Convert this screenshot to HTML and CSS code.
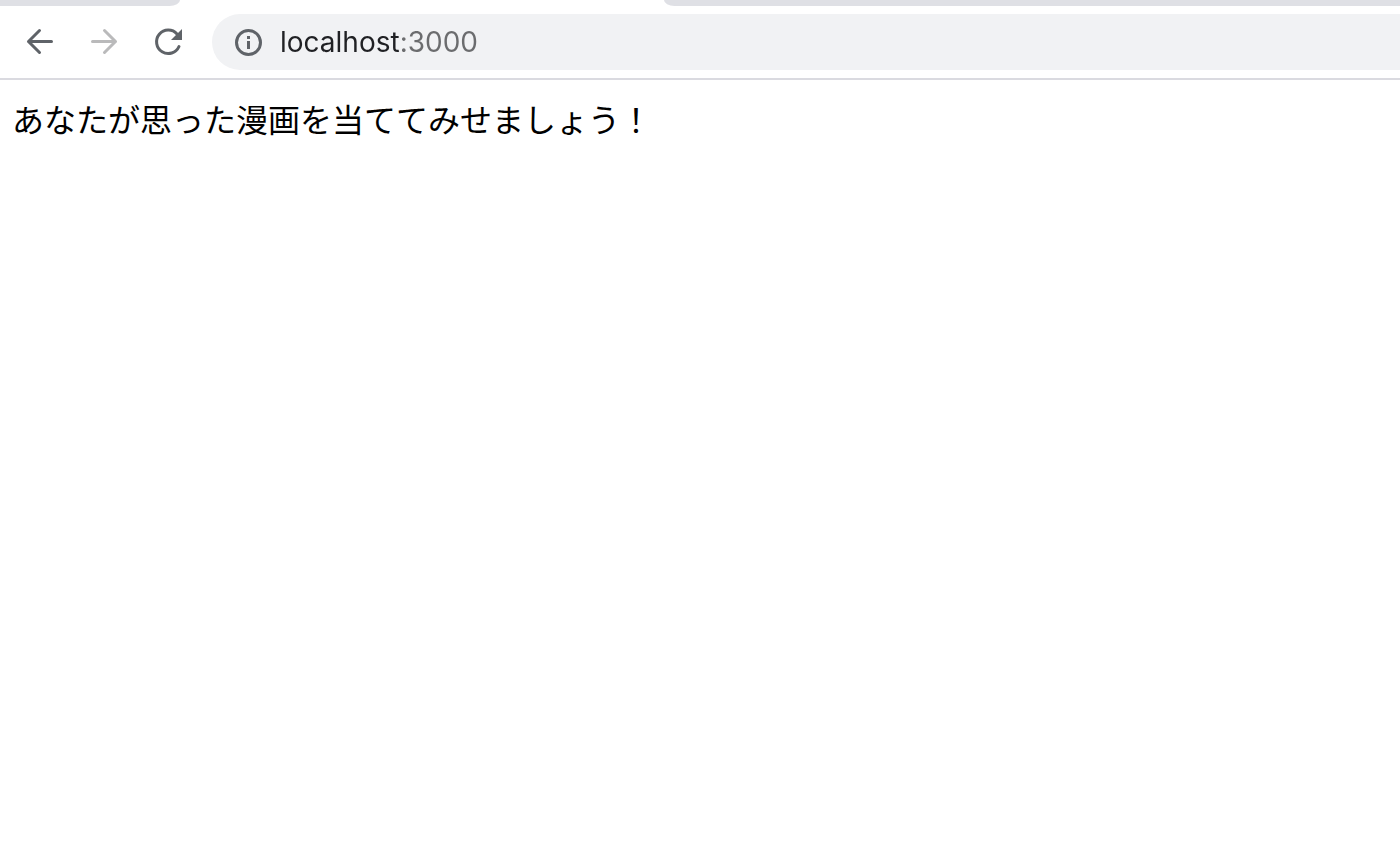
FILE: index.html
```html
<!DOCTYPE html>
<html lang="ja">
<head>
    <meta charset="UTF-8">
    <meta name="viewport" content="width=device-width, initial-scale=1.0">
    <title>localhost:3000</title>
    <link rel="stylesheet" href="styles.css">
</head>
<body>
    <div class="tabs">
        <div class="tab tab-left"></div>
        <div class="tab tab-right"></div>
    </div>
    <header class="toolbar">
        <button type="button" class="nav-button" aria-label="戻る">
            <svg viewBox="0 0 32 32" class="icon"><path d="M27.500 15.500H4.500M15.500 4.500 4.500 15.500 15.500 26.500"/></svg>
        </button>
        <button type="button" class="nav-button" aria-label="進む" disabled>
            <svg viewBox="0 0 32 32" class="icon"><path d="M4.500 15.500H27.500M16.500 4.500 27.500 15.500 16.500 26.500"/></svg>
        </button>
        <button type="button" class="nav-button" aria-label="再読み込み">
            <svg viewBox="0 0 32 32" class="icon"><path d="M27 20.500A11.700 11.700 0 1 1 25 8"/><path class="fill" d="M30 3V14H19Z"/></svg>
        </button>
        <form class="address">
            <svg viewBox="0 0 28 28" class="info"><circle cx="14.500" cy="14.500" r="12"/><path class="fill" d="M13 8h3v3h-3zM13 13h3V21h-3z"/></svg>
            <input type="text" class="url" name="url" aria-label="アドレス" value="localhost:3000" autocomplete="off" spellcheck="false">
        </form>
    </header>
    <main class="page">
        <p class="message">あなたが思った漫画を当ててみせましょう！</p>
    </main>
</body>
</html>
```

FILE: styles.css
```css
body{
  margin: 0;
  background-color: white;
  font-family: 'Liberation Sans', 'Noto Sans CJK JP', sans-serif;
}
.tabs{
  display: flex;
  height: 6px;
}
.tab{
  background-color: #dfe0e5;
}
.tab-left{
  width: 180px;
  border-bottom-right-radius: 14px 8px;
}
.tab-right{
  flex: 1;
  margin-left: 484px;
  border-bottom-left-radius: 14px 8px;
}
.toolbar{
  display: flex;
  align-items: center;
  gap: 32px;
  padding: 8px 0 8px 24px;
  border-bottom: 2px solid #dadae0;
}
.nav-button{
  display: flex;
  padding: 0;
  border: none;
  background: none;
  color: #5f6368;
  cursor: pointer;
}
.nav-button:disabled{
  color: #bababb;
  cursor: default;
}
.icon{
  width: 32px;
  height: 32px;
}
.icon, .info{
  fill: none;
  stroke: currentColor;
  stroke-width: 3;
  stroke-linecap: round;
  stroke-linejoin: round;
}
.fill{
  fill: currentColor;
  stroke: none;
}
.address{
  flex: 1;
  display: flex;
  align-items: center;
  gap: 18px;
  height: 56px;
  margin-left: -4px;
  padding-left: 22px;
  background-color: #f1f2f4;
  border-radius: 28px 0 0 28px;
}
.info{
  width: 28px;
  height: 28px;
  color: #5f6368;
}
/* host name dark, port number grey */
.url{
  flex: 1;
  min-width: 0;
  padding: 0;
  border: none;
  outline: none;
  font-family: Inter, sans-serif;
  font-size: 28px;
  line-height: 36px;
  color: transparent;
  caret-color: #202124;
  background: linear-gradient(to right, #202124 120px, #6b6c6e 120px);
  -webkit-background-clip: text;
  background-clip: text;
}
.page{
  padding: 17px 12px;
}
.message{
  margin: 0;
  font-size: 32px;
  line-height: 48px;
  color: black;
}
```
